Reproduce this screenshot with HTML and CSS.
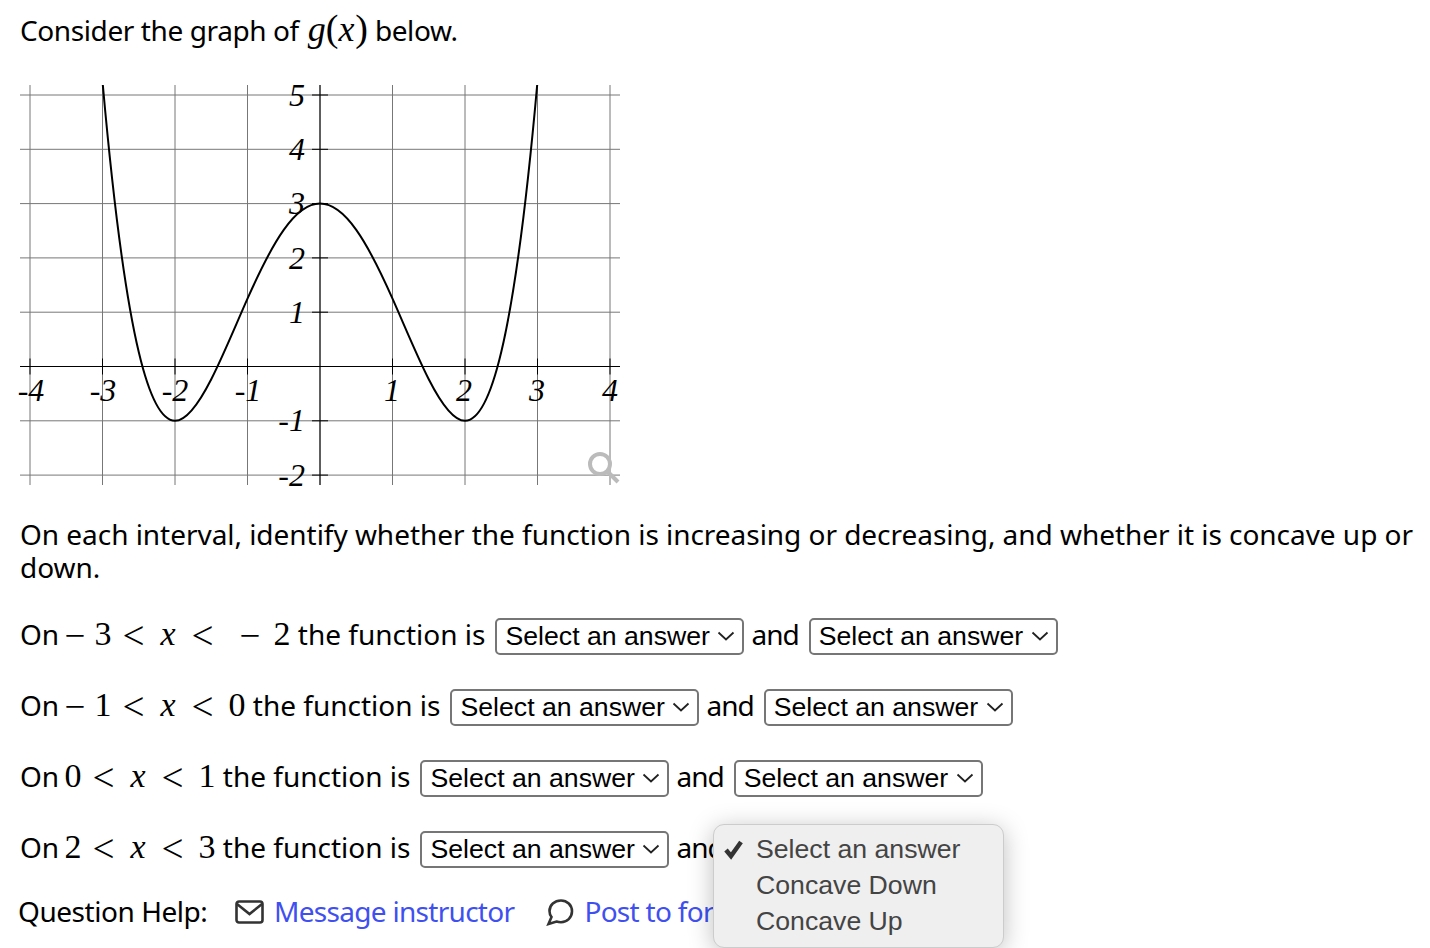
FILE: index.html
```html
<!DOCTYPE html>
<html lang="en">
<head>
    <meta charset="UTF-8">
    <meta name="viewport" content="width=device-width, initial-scale=1.0">
    <title>Question</title>
    <link rel="stylesheet" href="styles.css">
</head>
<body>
    <p class="intro">Consider the graph of <span class="math-inline"><i class="g">g</i><span class="paren">(</span><i class="var">x</i><span class="paren">)</span></span> below.</p>

    <svg class="graph" width="600" height="400" viewBox="0 0 600 400" role="img" aria-label="Graph of g of x">
        <defs>
            <clipPath id="plot"><rect width="600" height="400"/></clipPath>
        </defs>
        <!-- grid -->
        <g class="grid">
            <path d="M10 0V400M82.5 0V400M155 0V400M227.5 0V400M300 0V400M372.5 0V400M445 0V400M517.5 0V400M590 0V400"/>
            <path d="M0 10H600M0 64.3H600M0 118.6H600M0 172.9H600M0 227.2H600M0 335.8H600M0 390.1H600"/>
        </g>
        <!-- axes and ticks -->
        <g class="axes">
            <path d="M300 0V400M0 281.5H600"/>
            <path d="M10 273.5V289.5M82.5 273.5V289.5M155 273.5V289.5M227.5 273.5V289.5M372.5 273.5V289.5M445 273.5V289.5M517.5 273.5V289.5M590 273.5V289.5"/>
            <path d="M292 10H308M292 64.3H308M292 118.6H308M292 172.9H308M292 227.2H308M292 335.8H308M292 390.1H308"/>
        </g>
        <!-- g(x) = x^4/4 - 2x^2 + 3 -->
        <g clip-path="url(#plot)">
            <g transform="translate(300 281.5) scale(72.5 -54.3)">
                <path class="curve" d="M-3 5.25C-2.8333 2.75 -2.6667 1.2031 -2.5 .2656C-2.3333 -.6719 -2.1667 -1 -2 -1C-1.8333 -1 -1.6667 -.6719 -1.5 -.2344C-1.3333 .2031 -1.1667 .75 -1 1.25C-.8333 1.75 -.6667 2.2031 -.5 2.5156C-.3333 2.8281 -.1667 3 0 3C.1667 3 .3333 2.8281 .5 2.5156C.6667 2.2031 .8333 1.75 1 1.25C1.1667 .75 1.3333 .2031 1.5 -.2344C1.6667 -.6719 1.8333 -1 2 -1C2.1667 -1 2.3333 -.6719 2.5 .2656C2.6667 1.2031 2.8333 2.75 3 5.25"/>
            </g>
        </g>
        <!-- labels -->
        <g class="xlabels">
            <text x="11" y="316">-4</text>
            <text x="83" y="316">-3</text>
            <text x="155" y="316">-2</text>
            <text x="228" y="316">-1</text>
            <text x="372" y="316">1</text>
            <text x="444" y="316">2</text>
            <text x="517" y="316">3</text>
            <text x="590" y="316">4</text>
        </g>
        <g class="ylabels">
            <text x="285" y="21">5</text>
            <text x="285" y="75">4</text>
            <text x="285" y="129">3</text>
            <text x="285" y="184">2</text>
            <text x="285" y="238">1</text>
            <text x="285" y="346">-1</text>
            <text x="285" y="401">-2</text>
        </g>
        <!-- zoom button -->
        <g class="zoom-icon">
            <circle cx="580" cy="379" r="10"/>
            <path d="M587 386L598 397"/>
        </g>
    </svg>

    <p class="lead">On each interval, identify whether the function is increasing or decreasing, and whether it is concave up or down.</p>

    <div class="row">
        <span>On <span class="math"><span class="num"><span class="minus">&minus;</span>3</span><span class="rel">&lt;</span><i>x</i><span class="rel">&lt;</span><span class="num neg"><span class="minus">&minus;</span>2</span></span> the function is</span>
        <select><option>Select an answer</option><option>Increasing</option><option>Decreasing</option></select>
        <span class="and">and</span>
        <select><option>Select an answer</option><option>Concave Down</option><option>Concave Up</option></select>
    </div>
    <div class="row">
        <span>On <span class="math"><span class="num"><span class="minus">&minus;</span>1</span><span class="rel">&lt;</span><i>x</i><span class="rel">&lt;</span><span class="num">0</span></span> the function is</span>
        <select><option>Select an answer</option><option>Increasing</option><option>Decreasing</option></select>
        <span class="and">and</span>
        <select><option>Select an answer</option><option>Concave Down</option><option>Concave Up</option></select>
    </div>
    <div class="row">
        <span>On <span class="math"><span class="num">0</span><span class="rel">&lt;</span><i>x</i><span class="rel">&lt;</span><span class="num">1</span></span> the function is</span>
        <select><option>Select an answer</option><option>Increasing</option><option>Decreasing</option></select>
        <span class="and">and</span>
        <select><option>Select an answer</option><option>Concave Down</option><option>Concave Up</option></select>
    </div>
    <div class="row">
        <span>On <span class="math"><span class="num">2</span><span class="rel">&lt;</span><i>x</i><span class="rel">&lt;</span><span class="num">3</span></span> the function is</span>
        <select><option>Select an answer</option><option>Increasing</option><option>Decreasing</option></select>
        <span class="and">and</span>
        <select><option>Select an answer</option><option>Concave Down</option><option>Concave Up</option></select>
    </div>

    <div class="help">
        <span class="help-label">Question Help:</span>
        <a href="#" class="help-link">
            <svg width="30" height="24" viewBox="0 0 30 24" aria-hidden="true">
                <rect x="2.5" y="1.5" width="26" height="21" rx="2.5"/>
                <path d="M3 4L15.500 14L28 4"/>
            </svg>
            Message instructor
        </a>
        <a href="#" class="help-link">
            <svg width="28" height="28" viewBox="0 0 28 28" aria-hidden="true">
                <path d="M15 2.500C8.500 2.500 3.500 7 3.500 13C3.500 15.500 4.300 17.500 5.500 19L2.500 26L10.500 23.500C12 24 13.500 24.200 15 24.200C21 24.200 26 19.500 26 13.300C26 7 21 2.500 15 2.500Z"/>
            </svg>
            Post to forum
        </a>
    </div>

    <!-- open native dropdown of the last select -->
    <div class="menu">
        <svg class="menu-check" width="22" height="20" viewBox="0 0 22 20" aria-hidden="true">
            <path d="M3 10L8 16L18 2"/>
        </svg>
        <div class="menu-item">Select an answer</div>
        <div class="menu-item">Concave Down</div>
        <div class="menu-item">Concave Up</div>
    </div>
</body>
</html>
```
FILE: styles.css
```css
/* Base styles */
html {
    height: 948px;
    overflow: hidden;
}

body {
    position: relative;
    height: 948px;
    margin: 0;
    padding-left: 20px;
    overflow: hidden;
    background: #fff;
    color: #000;
    font-family: "Noto Sans", sans-serif;
    font-size: 28px;
    line-height: 33px;
}

p {
    margin: 0;
}

.intro {
    padding-top: 13px;
    letter-spacing: -0.4px;
}

.lead {
    width: 1400px;
    margin-top: 33px;
    letter-spacing: -0.04px;
}

/* Math */
.math,
.math-inline {
    font-family: "Liberation Serif", serif;
    font-size: 34px;
    letter-spacing: 0;
}

.math {
    margin-left: -2px;
}

.math i {
    margin: 0 5px 0 1px;
}

.math-inline .g {
    margin-left: 2px;
    font-size: 36px;
}

.math-inline .var {
    padding: 0 1px 0 0;
    font-size: 36px;
}

.paren {
    font-size: 38px;
    line-height: 0;
}

.minus {
    display: inline-block;
    width: 30px;
    font-size: 37px;
    line-height: 0;
    vertical-align: -3px;
}

.neg .minus {
    width: 34px;
}

.rel {
    margin: 0 15px 0 11px;
    font-size: 39px;
    line-height: 0;
    vertical-align: -4px;
}

.neg {
    margin-left: 11px;
}

/* Graph */
.graph {
    display: block;
    margin-top: 38px;
    overflow: visible;
}

.grid path {
    fill: none;
    stroke: #777;
    stroke-width: 1;
}

.axes path {
    fill: none;
    stroke: #000;
    stroke-width: 1;
}

.curve {
    fill: none;
    stroke: #000;
    stroke-width: 2;
    vector-effect: non-scaling-stroke;
}

.xlabels text,
.ylabels text {
    font-family: "Liberation Serif", serif;
    font-size: 32px;
    font-style: italic;
}

.xlabels text {
    text-anchor: middle;
}

.ylabels text {
    text-anchor: end;
}

.zoom-icon circle,
.zoom-icon path {
    fill: none;
    stroke: #bbb;
    stroke-width: 4;
}

/* Answer rows */
.row {
    display: flex;
    align-items: center;
    gap: 10px;
    height: 36px;
    margin-top: 35px;
    white-space: nowrap;
}

.lead + .row {
    margin-top: 34px;
}

.row > span {
    padding-bottom: 4px;
}

.row .and {
    margin-left: -3px;
    letter-spacing: -1px;
}

select {
    box-sizing: border-box;
    width: 249px;
    height: 37px;
    padding: 0 0 0 8px;
    border: 2px solid #767676;
    border-radius: 5px;
    appearance: none;
    background: #fff url("data:image/svg+xml,%3Csvg xmlns='http://www.w3.org/2000/svg' width='18' height='10' viewBox='0 0 18 10'%3E%3Cpath d='M1.500 1.500L9 8.500L16.500 1.500' fill='none' stroke='%23222' stroke-width='1.800'/%3E%3C/svg%3E") no-repeat right 7px center;
    color: #000;
    font-family: "Liberation Sans", sans-serif;
    font-size: 26.67px;
}

/* Question help */
.help {
    display: flex;
    align-items: center;
    height: 33px;
    margin: 28px 0 0 -2px;
    white-space: nowrap;
}

.help-label {
    width: 216px;
    letter-spacing: -0.45px;
}

.help-link {
    display: flex;
    align-items: center;
    gap: 10px;
    margin-right: 32px;
    color: #4050f0;
    letter-spacing: -0.7px;
    text-decoration: none;
}

.help-link svg {
    flex: none;
}

.help-link rect,
.help-link svg path {
    fill: none;
    stroke: #333;
    stroke-width: 2.6;
}

/* Dropdown */
.menu {
    position: absolute;
    top: 824px;
    left: 713px;
    box-sizing: border-box;
    width: 291px;
    height: 124px;
    padding: 6px 0 0 42px;
    border: 1px solid #ccc;
    border-radius: 11px;
    background: #efefef;
    box-shadow: 0 4px 24px rgba(0,0,0,0.25);
    color: #444;
    font-family: "Liberation Sans", sans-serif;
    font-size: 26.67px;
}

.menu-item {
    height: 36px;
    line-height: 36px;
}

.menu-check {
    position: absolute;
    top: 15px;
    left: 9px;
}

.menu-check path {
    fill: none;
    stroke: #333;
    stroke-width: 4.5;
}
```
